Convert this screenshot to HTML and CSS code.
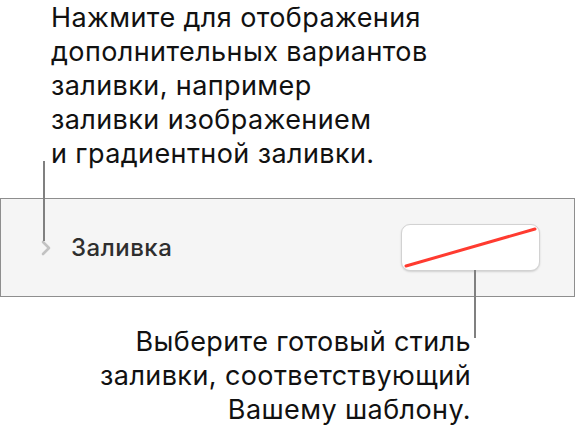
FILE: index.html
```html
<!DOCTYPE html>
<html lang="ru">
<head>
	<meta charset="UTF-8">
	<meta name="viewport" content="width=device-width, initial-scale=1.0">
	<title>Заливка</title>
	<link rel="stylesheet" href="styles.css">
</head>
<body>

	<!-- note over the disclosure arrow -->
	<div class="note note-top">
		Нажмите для отображения<br>
		дополнительных вариантов<br>
		заливки, например<br>
		заливки изображением<br>
		и градиентной заливки.
	</div>

	<div class="fill-row">
		<span class="chevron">
			<svg width="10" height="16" viewBox="0 0 10 16">
				<polyline points="2,2 8,8 2,14" fill="none" stroke="#c2c2c2" stroke-width="2.6" stroke-linecap="round" stroke-linejoin="round"/>
			</svg>
		</span>
		<span class="fill-label">Заливка</span>
		<div class="swatch">
			<svg width="137" height="45" viewBox="0 0 137 45">
				<line x1="4" y1="41" x2="133" y2="4" stroke="#ff3b30" stroke-width="3" stroke-linecap="round"/>
			</svg>
		</div>
	</div>

	<!-- note under the swatch -->
	<div class="note note-bottom">
		Выберите готовый стиль<br>
		заливки, соответствующий<br>
		Вашему шаблону.
	</div>

</body>
</html>
```

FILE: styles.css
```css
body {
	margin: 0;
	background: #fff;
	font-family: Inter, "Noto Sans", sans-serif;
	color: #111;
}

.note {
	font-size: 27px;
	line-height: 34px;
	letter-spacing: 0.4px;
}

.note-top {
	padding: 1px 0 0 51px;
}

.note-bottom {
	margin-top: 28px;
	padding-right: 104px;
	text-align: right;
}

.fill-row {
	margin-top: 27px;
	width: 573px;
	height: 97px;
	background: #f5f5f5;
	border: 1px solid #8e8e8e;
	display: flex;
	align-items: center;
}

.chevron {
	position: relative;
	display: flex;
	margin-left: 40px;
}

/* leader line up to the top note */
.chevron::before {
	content: "";
	position: absolute;
	left: 2px;
	bottom: 15px;
	width: 2px;
	height: 80px;
	background: #808080;
}

.fill-label {
	margin-left: 20px;
	font-size: 24px;
	font-weight: 500;
	letter-spacing: 0.5px;
	color: #2e2e2e;
}

.swatch {
	position: relative;
	margin-left: auto;
	margin-right: 34px;
	width: 137px;
	height: 45px;
	background: #fff;
	border: 1px solid #d2d2d2;
	border-radius: 9px;
	box-shadow: 0 1px 2px rgba(0,0,0,0.15);
}

.swatch svg {
	display: block;
	border-radius: 9px;
}

/* leader line down to the bottom note */
.swatch::after {
	content: "";
	position: absolute;
	left: 72px;
	top: 100%;
	width: 2px;
	height: 68px;
	background: #808080;
}
```
